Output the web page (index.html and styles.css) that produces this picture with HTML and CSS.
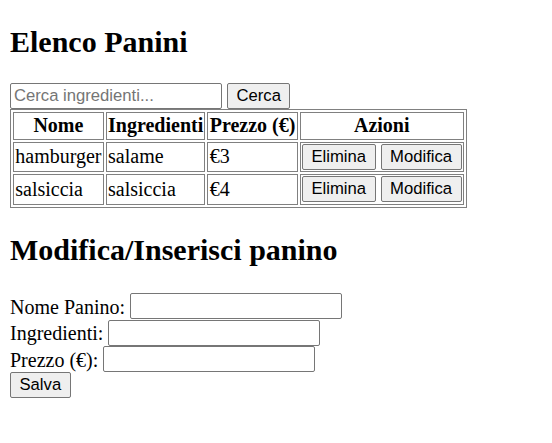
FILE: index.html
```html
<!DOCTYPE html>
<html>
<head>
<meta charset="utf-8">
<link rel="stylesheet" href="styles.css">
</head>
<body class="page">
<h1 class="title">Elenco Panini</h1>
<div class="search"><input class="field" type="text" placeholder="Cerca ingredienti..."> <button class="btn">Cerca</button></div>
<table class="list">
<tr><th>Nome</th><th>Ingredienti</th><th>Prezzo (€)</th><th>Azioni</th></tr>
<tr><td>hamburger</td><td>salame</td><td>€3</td><td><button class="btn">Elimina</button> <button class="btn">Modifica</button></td></tr>
<tr><td>salsiccia</td><td>salsiccia</td><td>€4</td><td><button class="btn">Elimina</button> <button class="btn">Modifica</button></td></tr>
</table>
<h2 class="subtitle">Modifica/Inserisci panino</h2>
<form class="form">
<label>Nome Panino:</label> <input class="field" type="text"><br>
<label>Ingredienti:</label> <input class="field" type="text"><br>
<label>Prezzo (€):</label> <input class="field" type="text"><br>
<button class="btn" type="button">Salva</button>
</form>
</body>
</html>
```
FILE: styles.css
```css
.page {
  margin: 10px;
  font-family: "Liberation Serif", "Times New Roman", serif;
  font-size: 20px;
  color: #000;
}
.title { font-size: 30px; margin: 15px 0 24px; }
.subtitle { font-size: 30px; margin: 25px 0 26.5px; }
.field {
  font-family: "Liberation Sans", Arial, sans-serif;
  font-size: 16.67px;
  width: 212px;
  box-sizing: border-box;
  height: 26px;
  padding: 1px 3px;
  border: 1px solid #767676;
  border-radius: 2px;
  margin: 0;
  vertical-align: bottom;
}
.form .field { margin-top: 0.4px; }
.field::placeholder { color: #757575; }
.btn {
  font-family: "Liberation Sans", Arial, sans-serif;
  font-size: 16.67px;
  padding: 1px 8.5px;
  height: 26px;
  border: 1px solid #767676;
  border-radius: 2px;
  background: #efefef;
  color: #000;
  margin: 0;
  vertical-align: bottom;
}
.list {
  border: 1px solid #808080;
  border-spacing: 2.5px;
}
.list th, .list td {
  padding: 1.25px;
  border: 1px solid #808080;
}
.form { margin: 0; }
```
